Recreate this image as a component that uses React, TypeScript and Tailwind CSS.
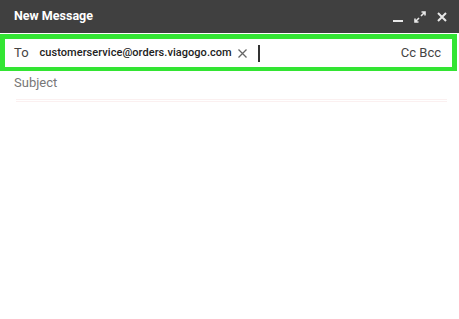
export default function App() {
  return (
    <div className="w-[459px] h-[319px] bg-white overflow-hidden font-['Roboto','Liberation_Sans',sans-serif]">
      <header className="h-[33px] bg-[#404040] flex items-center pl-[14px] pr-[10px]">
        <h1 className="text-white text-[12.5px] font-bold">New Message</h1>
        <div className="ml-auto flex items-center gap-[8px] text-[#e8e8e8]">
          <svg width="13" height="14" viewBox="0 0 13 14">
            <rect x="1" y="10" width="10" height="2" fill="currentColor" />
          </svg>
          <svg width="14" height="14" viewBox="0 0 14 14" fill="none" stroke="currentColor" strokeWidth="1.6">
            <path d="M8 6 L12 2 M8.5 2 H12 V5.5" />
            <path d="M6 8 L2 12 M2 8.5 V12 H5.5" />
          </svg>
          <svg width="14" height="14" viewBox="0 0 14 14" fill="none" stroke="currentColor" strokeWidth="2">
            <path d="M3 3 L11 11 M11 3 L3 11" />
          </svg>
        </div>
      </header>

      <div className="mt-[1px] mr-[2px] h-[37px] border-[5px] border-b-[4px] border-[#33e533] flex items-center pl-[9px] pr-[11px] text-[13px]">
        <span className="text-[#444]">To</span>
        <span className="ml-[11px] text-[11px] font-medium text-[#222] tracking-[0.05px]">
          customerservice@orders.viagogo.com
        </span>
        <svg className="ml-[5px] text-[#666]" width="11" height="11" viewBox="0 0 11 11" fill="none" stroke="currentColor" strokeWidth="1.3">
          <path d="M1.5 1.5 L9.5 9.5 M9.5 1.5 L1.5 9.5" />
        </svg>
        <span className="ml-[10px] w-[2px] h-[17px] bg-[#333]" />
        <span className="ml-auto text-[#444]">Cc Bcc</span>
      </div>

      <div className="px-[14px] pt-[2px]">
        <div className="text-[13px] text-[#777]">Subject</div>
        <div className="mt-[6px] ml-[2px] mr-[-2px] h-[3px] border-t border-b border-[#fbf0f0]" />
      </div>
    </div>
  )
}
